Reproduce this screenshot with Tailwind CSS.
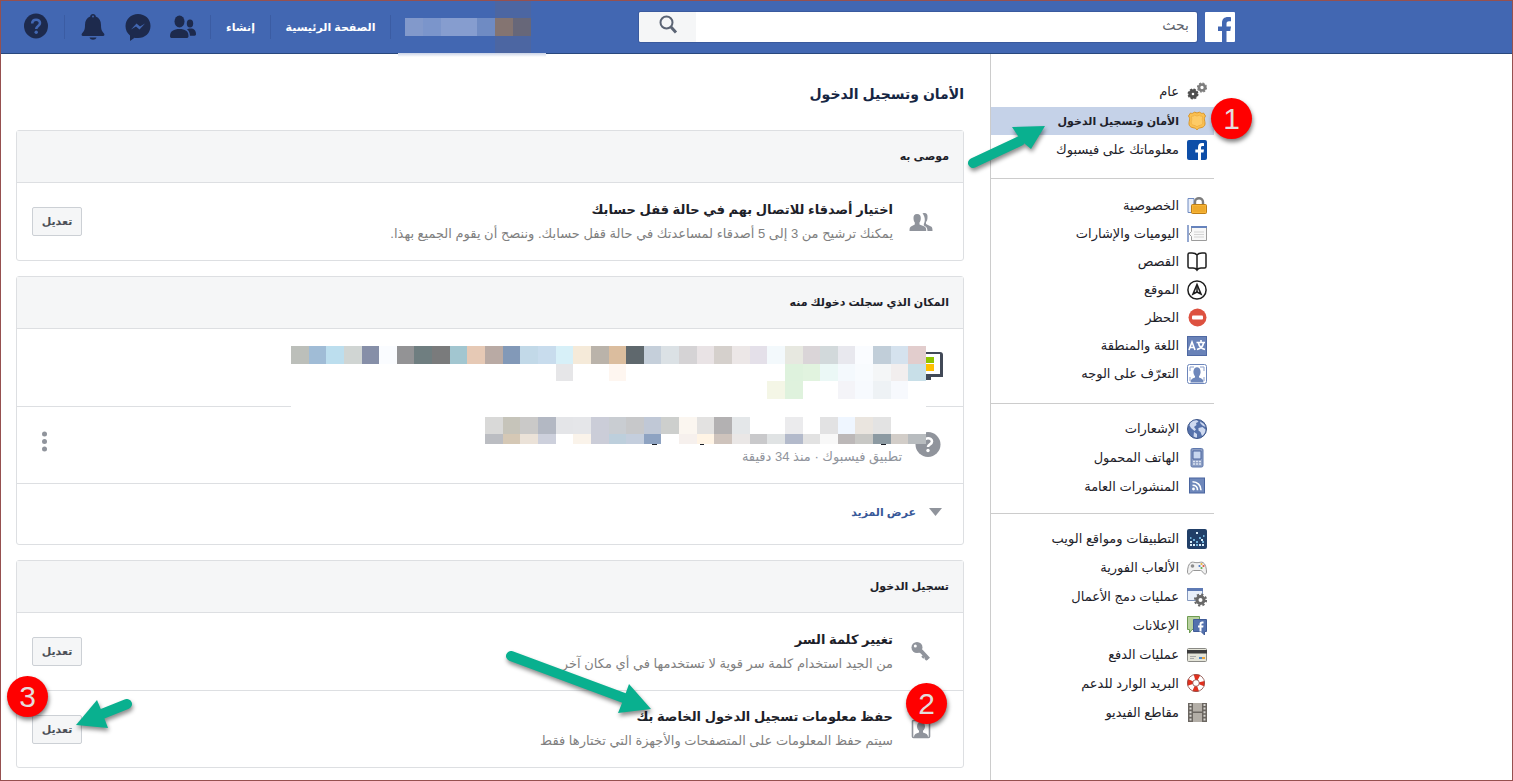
<!DOCTYPE html>
<html lang="ar" dir="rtl">
<head>
    <meta charset="UTF-8">
    <meta name="viewport" content="width=device-width, initial-scale=1.0">
    <title>الأمان وتسجيل الدخول</title>
    <script src="https://cdn.jsdelivr.net/npm/@tailwindcss/browser@4"></script>
</head>
<body class="min-h-screen flex flex-col bg-white border border-[#96504f] font-['Liberation_Sans','DejaVu_Sans',sans-serif] text-[#1d2129] overflow-x-hidden">
    <!-- Top bar -->
    <header class="relative h-[53px] shrink-0 bg-[#4267b2] border-b border-[#29487d] flex items-center pr-[277px] pl-[22px]">
        <a href="#" aria-label="فيسبوك" class="shrink-0 ml-2">
            <svg class="block" width="30" height="30" viewBox="0 0 30 30"><rect width="30" height="30" rx="1" fill="#fff"/><path d="M17 30V19h-4v-4.500h4v-3.500c0-4 2.200-6 6-6 1.300 0 2 .1 3 .3v4h-2c-2 0-2.500 1-2.500 2.500v2.700h4.500l-.7 4.500h-3.800v11z" fill="#4267b2"/></svg>
        </a>
        <form class="flex-1 h-[30px] flex bg-white rounded-xs overflow-hidden shadow-[0_0_0_1px_#3a5a9e]">
            <input type="text" aria-label="بحث" placeholder="بحث" class="flex-1 min-w-0 px-2 pb-1 text-[14px] outline-none placeholder:text-[#5f646d]">
            <button type="button" aria-label="ابحث" class="w-[57px] bg-[#f5f6f7] flex items-center justify-center pb-1">
                <svg width="20" height="22" viewBox="0 0 20 22" fill="none" stroke="#5b6474"><circle cx="8.500" cy="8.500" r="6" stroke-width="2"/><path d="M13 13l5 5.500" stroke-width="3"/></svg>
            </button>
        </form>
        <nav class="flex items-center shrink-0 text-white text-[11px] font-bold pr-[108px]">
            <svg class="block" width="126" height="18" viewBox="0 0 126 18" shape-rendering="crispEdges"><path fill="#8299cb" d="M0 0h18v18H0z"/><path fill="#7b95cb" d="M18 0h18v18H18z"/><path fill="#869dcf" d="M36 0h36v18H36z"/><path fill="#6f8bc3" d="M72 0h18v18H72z"/><path fill="#8c7a70" d="M90 0h18v18H90z"/><path fill="#66687b" d="M108 0h18v18h-18z"/></svg>
            <span class="w-px h-6 bg-[#3b5ca3] mx-[14px]"></span>
            <a href="#" class="w-[91px] text-center whitespace-nowrap">الصفحة الرئيسية</a>
            <span class="w-px h-6 bg-[#3b5ca3] mx-[14px]"></span>
            <a href="#" class="w-[31px] text-center whitespace-nowrap">إنشاء</a>
            <span class="w-px h-6 bg-[#3b5ca3] mx-[14px]"></span>
            <div class="flex gap-[19px]">
                <button type="button" aria-label="طلبات الصداقة">
                    <svg class="block" width="26" height="26" viewBox="0 0 26 26" fill="#1d2a4d"><ellipse cx="9.500" cy="7.500" rx="5" ry="6"/><path d="M0 22c0-5 4-7 9.500-7s9 2 9 7c0 1.500-.8 2-2 2H2c-1.300 0-2-.5-2-2z"/><ellipse cx="20" cy="9.500" rx="3.200" ry="4"/><path d="M17 15.500c1-.8 2-1 3.500-1 3.500 0 5.500 2 5.500 5.500 0 1.300-.5 1.700-1.500 1.700h-4.600c0-2.800-1-4.900-2.900-6.200z"/></svg>
                </button>
                <button type="button" aria-label="الرسائل">
                    <svg class="block" width="26" height="28" viewBox="0 0 26 28"><path fill="#1d2a4d" d="M13 1C6 1 .5 6 .5 13c0 4 1.700 7.200 4.500 9.500V28l4.600-3.200c1 .2 1.900.3 3.400.3 7 0 12.500-5.100 12.500-12.100S20 1 13 1z"/><path fill="#4267b2" d="M6 16.500l5.500-6 3.500 3 5-3-5.500 6-3.500-3z"/></svg>
                </button>
                <button type="button" aria-label="الإشعارات">
                    <svg class="block" width="26" height="28" viewBox="0 0 26 28" fill="#1d2a4d"><path d="M13 1c1.600 0 2.800 1.100 2.800 2.600C19.300 5 21 8 21 12c0 5 1.300 6.700 3 8.500.8 1 .4 2.500-1 2.500H3c-1.400 0-1.800-1.500-1-2.500 1.700-1.800 3-3.500 3-8.500 0-4 1.700-7 5.200-8.400C10.200 2.100 11.400 1 13 1z"/><path d="M9.500 24.500h7c-.6 1.500-1.800 2.200-3.500 2.200s-2.900-.7-3.500-2.200z"/><circle cx="13" cy="3.500" r=".9" fill="#4267b2"/></svg>
                </button>
            </div>
            <span class="w-px h-6 bg-[#3b5ca3] mx-[15px]"></span>
            <button type="button" aria-label="مساعدة">
                <svg class="block" width="26" height="28" viewBox="0 0 26 28"><ellipse cx="13" cy="13" rx="12" ry="12.500" fill="#1d2a4d"/><path d="M9.200 10.500c0-5 7.800-5 7.800-.4 0 3-3.800 2.800-3.800 6" fill="none" stroke="#4267b2" stroke-width="2.600"/><circle cx="13.200" cy="19.300" r="1.700" fill="#4267b2"/></svg>
            </button>
        </nav>
        <!-- hidden name column and the smear under it -->
        <div class="absolute -top-px left-[494px] w-9 h-[54px] bg-[#6a6472]/25"></div>
        <div class="absolute top-[52px] left-[397px] w-[148px] h-1 bg-linear-to-b from-[#c9d2e6] to-white"></div>
    </header>

    <div class="flex flex-1 pr-[298px]">
        <!-- Settings menu -->
        <aside class="w-[224px] shrink-0 border-l border-[#cccccc] pt-6 text-[13px] leading-5 text-[#1d2129]">
            <ul class="flex flex-col gap-px pb-[14px]">
                <li><a href="#" class="h-7 flex items-center gap-2 pr-[7px]">
                    <svg width="20" height="20" viewBox="0 0 20 20" fill="none"><circle cx="6" cy="12" r="3" stroke="#4f4f4f" stroke-width="3.400"/><circle cx="6" cy="12" r="4.800" stroke="#4f4f4f" stroke-width="1.400" stroke-dasharray="2.200 1.570"/><circle cx="15" cy="5.500" r="3" stroke="#7d7d7d" stroke-width="2.700"/><circle cx="15" cy="5.500" r="4.500" stroke="#7d7d7d" stroke-width="1.200" stroke-dasharray="2 1.530"/></svg>
                    عام</a></li>
                <li class="relative"><a href="#" aria-current="page" class="h-7 flex items-center gap-2 pr-[7px] bg-[#c5d2e8] font-bold text-[11px]">
                    <svg width="20" height="20" viewBox="0 0 20 20"><path d="M3.500 2c1.500.8 3 .3 3.800-1L10 2l2.700-1c.8 1.300 2.300 1.800 3.800 1L18.500 5c-1.300 1.600-1.300 3.200-.7 5.500.8 3.700-.6 5.600-3.800 6.200-2.100.4-3.200.8-4 2.300-.8-1.500-1.900-1.900-4-2.300-3.200-.6-4.600-2.500-3.800-6.200.6-2.300.6-3.900-.7-5.500z" fill="#fbc04f" stroke="#d9962c"/><path d="M5 5c1 .3 1.800 0 2.500-.8l2.500.8 2.500-.8c.7.8 1.500 1.100 2.500.8l.8 1c-.8 1.500-.5 3 0 4.800.3 2.200-.8 3.200-2.800 3.600-1.400.3-2.300.7-3 1.400-.7-.7-1.600-1.100-3-1.400-2-.4-3.100-1.400-2.800-3.600.5-1.800.8-3.300 0-4.800z" fill="#fdcb66" stroke="#f0b348"/></svg>
                    الأمان وتسجيل الدخول</a>
                    <span class="absolute z-10 -right-[38px] -top-[9px] w-[41px] h-[41px] rounded-full bg-[#ff0000] text-[#e4dcdc] text-[30px] leading-[41px] text-center shadow-[1px_3px_4px_rgba(0,0,0,0.5)]">1</span>
                    <svg class="absolute z-10 right-[164px] top-[12px] drop-shadow-[1px_3px_2px_rgba(0,0,0,0.45)]" width="90" height="54" viewBox="0 0 90 54"><path d="M13 44L60 22" stroke="#09b08f" stroke-width="10" stroke-linecap="round"/><path d="M85 7L52 8l8 12 5 5 6 5z" fill="#09b08f"/></svg></li>
                <li><a href="#" class="h-7 flex items-center gap-2 pr-[7px]">
                    <svg width="20" height="20" viewBox="0 0 20 20"><rect width="20" height="20" rx="2" fill="#0d4ea8"/><path d="M11 20v-7.500H8.300v-3H11V7.300C11 4.500 12.500 3 15 3c.8 0 1.500.1 2 .2V6h-1.400c-1.200 0-1.600.6-1.600 1.600v1.900h3l-.5 3H14V20z" fill="#fff"/></svg>
                    معلوماتك على فيسبوك</a></li>
            </ul>
            <ul class="flex flex-col border-t border-[#cccccc] pt-[13px] pb-[15px]">
                <li><a href="#" class="h-7 flex items-center gap-2 pr-[7px]">
                    <svg width="20" height="20" viewBox="0 0 20 20"><path d="M1 2.500h6v14H1z" fill="#e8eefa" stroke="#6f8ac0"/><path d="M8 9V6c0-5 8-5 8 0v3" fill="none" stroke="#7d7d7d" stroke-width="2.400"/><rect x="4.500" y="8.500" width="15" height="9" rx="1" fill="#f7b436" stroke="#bd7e17"/><path d="M6 11h12M6 13h12M6 15h12" stroke="#e49f25"/></svg>
                    الخصوصية</a></li>
                <li><a href="#" class="h-7 flex items-center gap-2 pr-[7px]">
                    <svg width="20" height="20" viewBox="0 0 20 20"><path d="M1 1v17" stroke="#6f8ac0" stroke-width="1.500"/><path d="M4.500 3.500h15v13h-15v-4l-2.500-2.500 2.500-2.500z" fill="#f8f8f8" stroke="#9b9b9b"/><path d="M4 3h16" stroke="#6683bd" stroke-width="2"/><path d="M7 8h10M7 10.500h10M7 13h10" stroke="#d4d4d4"/></svg>
                    اليوميات والإشارات</a></li>
                <li><a href="#" class="h-7 flex items-center gap-2 pr-[7px]">
                    <svg width="20" height="20" viewBox="0 0 20 20" fill="none" stroke="#1d1d1d" stroke-width="1.500"><path d="M10 3C9 1.600 7.500 1 5 1H2.500C1.500 1 1 1.500 1 2.500v12c0 1 .5 1.500 1.500 1.500H6c2.200 0 3.300.8 4 2 .7-1.200 1.800-2 4-2h3.500c1 0 1.500-.5 1.500-1.500v-12c0-1-.5-1.500-1.500-1.500H15c-2.500 0-4 .6-5 2zM10 3v14"/></svg>
                    القصص</a></li>
                <li><a href="#" class="h-7 flex items-center gap-2 pr-[7px]">
                    <svg width="20" height="20" viewBox="0 0 20 20" fill="none" stroke="#1d1d1d"><circle cx="10" cy="10" r="9.100" stroke-width="1.500"/><path d="M10 4.500l4 9.500-4-2-4 2z" stroke-width="1.600"/><path d="M10 5v7" stroke-width="1.500"/></svg>
                    الموقع</a></li>
                <li><a href="#" class="h-7 flex items-center gap-2 pr-[7px]">
                    <svg width="20" height="20" viewBox="0 0 20 20"><circle cx="10.500" cy="9.500" r="9" fill="#dd5140"/><rect x="5" y="7.500" width="11" height="4" rx="1" fill="#fff"/></svg>
                    الحظر</a></li>
                <li><a href="#" class="h-7 flex items-center gap-2 pr-[7px]">
                    <svg width="20" height="20" viewBox="0 0 20 20" fill="none" stroke="#fff" stroke-width="1.600"><rect x=".5" y=".5" width="19" height="19" fill="#6982b8" stroke="#4f69a3" stroke-width="1"/><path d="M2 14L5 6l3 8M3 11.500h4"/><path d="M9.500 6.500H18M14 4v2.500M11.500 7c.5 3 3 5.500 6.500 6.500M16.500 7c-.5 3-3 5.500-6.500 6.500"/></svg>
                    اللغة والمنطقة</a></li>
                <li><a href="#" class="h-7 flex items-center gap-2 pr-[7px]">
                    <svg width="20" height="20" viewBox="0 0 20 20"><rect x=".5" y=".5" width="19" height="19" rx="2" fill="#fff" stroke="#6d86bb"/><path d="M3 7V3h4M13 3h4v4M3 13v4M17 13v4" fill="none" stroke="#8b9fcb"/><ellipse cx="10" cy="8" rx="3.600" ry="4.800" fill="#6f88bb"/><path d="M8 11h4v2.500c3 .7 4.500 2 4.500 5h-13c0-3 1.500-4.300 4.500-5z" fill="#6f88bb"/></svg>
                    التعرّف على الوجه</a></li>
            </ul>
            <ul class="flex flex-col gap-px border-t border-[#cccccc] pt-[11px] pb-3">
                <li><a href="#" class="h-7 flex items-center gap-2 pr-[7px]">
                    <svg width="20" height="20" viewBox="0 0 20 20"><circle cx="10" cy="10" r="9.500" fill="#5672ab" stroke="#3d5689"/><path d="M3 4.500C5 2 7.500 1 10 1.200l1.500 1.500L9 4l.5 2L7 8l2 2.500L7.500 12 4 9 2.500 6.500zM13 2.500l4 2.500 1.500 3-3-1.500-2-2zM11.500 9l4-1 3 2.500c0 3-1.300 5-3.500 6.500l-1.500-4-2-1.500zM7 13l3 2v3.500c-1.500 0-2.500-.5-3.500-1z" fill="#cfdaf0"/></svg>
                    الإشعارات</a></li>
                <li><a href="#" class="h-7 flex items-center gap-2 pr-[7px]">
                    <svg width="20" height="20" viewBox="0 0 20 20"><rect x="4" y=".5" width="12" height="18.500" rx="1.500" fill="#8b9dc3" stroke="#5f78ad"/><path d="M6 3h8v8H6z" fill="#c7d6ef" stroke="#4b659f"/><path d="M6 13.500h2.200M9 13.500h2.200M12 13.500h2M6 16h2.200M9 16h2.200M12 16h2" stroke="#dce4f2" stroke-width="1.300"/></svg>
                    الهاتف المحمول</a></li>
                <li><a href="#" class="h-7 flex items-center gap-2 pr-[7px]">
                    <svg width="20" height="20" viewBox="0 0 20 20"><rect x="2.500" y="1" width="15" height="15" fill="#6f88bb" stroke="#4a659f"/><circle cx="6.500" cy="12" r="1.400" fill="#fff"/><path d="M5.500 8.200c3 0 5 2 5 5M5.500 4.700c5 0 8.500 3.500 8.500 8.500" fill="none" stroke="#fff" stroke-width="1.600"/></svg>
                    المنشورات العامة</a></li>
            </ul>
            <ul class="flex flex-col gap-px border-t border-[#cccccc] pt-[11px]">
                <li><a href="#" class="h-7 flex items-center gap-2 pr-[7px]">
                    <svg width="20" height="20" viewBox="0 0 20 20"><rect width="20" height="20" rx="2" fill="#213f68"/><path fill="#d9eefa" d="M9 3h2v2H9zM3 12h2v2H3zM14 10h2v2h-2zM6 15h2v2H6zM12 15h2v2h-2zM15 15h2v2h-2zM3 15h2v2H3z"/><path fill="#6fb0d8" d="M6 10h2v2H6zM12 8h2v2h-2zM9 15h2v2H9zM15 12h2v2h-2zM9 12h2v2H9zM3 8h1.500v2H3zM16 6h1.500v2H16z"/></svg>
                    التطبيقات ومواقع الويب</a></li>
                <li><a href="#" class="h-7 flex items-center gap-2 pr-[7px]">
                    <svg width="20" height="20" viewBox="0 0 20 20"><path d="M4 4.500c2-1 3 .2 6 .2s4-1.200 6-.2c2.500 1.200 3.500 6 3.500 9.500 0 2.700-2.200 2.500-3.500.5-1-1.500-1.500-2-2.500-2h-7c-1 0-1.500.5-2.500 2-1.300 2-3.500 2.200-3.500-.5 0-3.500 1-8.300 3.500-9.500z" fill="#f1f1f1" stroke="#969696"/><circle cx="5.500" cy="8" r="1.800" fill="#8d8d8d"/><circle cx="14.500" cy="6" r="1.100" fill="#e9b53c"/><circle cx="14.500" cy="10" r="1.100" fill="#65ad4c"/><circle cx="12.500" cy="8" r="1.100" fill="#4877c9"/><circle cx="16.500" cy="8" r="1.100" fill="#e2543b"/></svg>
                    الألعاب الفورية</a></li>
                <li><a href="#" class="h-7 flex items-center gap-2 pr-[7px]">
                    <svg width="20" height="20" viewBox="0 0 20 20"><path d="M.5 1.500h15v12H.5z" fill="#e9f0fa" stroke="#8397bd"/><path d="M0 1h16v3H0z" fill="#5e7ab4"/><circle cx="13.500" cy="13" r="3.500" fill="#fff" stroke="#686868" stroke-width="3"/><circle cx="13.500" cy="13" r="5.600" fill="none" stroke="#686868" stroke-width="2" stroke-dasharray="2.200 2.200"/></svg>
                    عمليات دمج الأعمال</a></li>
                <li><a href="#" class="h-7 flex items-center gap-2 pr-[7px]">
                    <svg width="20" height="20" viewBox="0 0 20 20"><path d="M.5.500h12v13H5L2.500 17v-3.500h-2z" fill="#b8d19f" stroke="#6f9c52"/><path d="M6.500 3.500h13v12h-2V19L14 15.500H6.500z" fill="#5370ad" stroke="#3f5b97"/><path d="M12.500 15.500v-4H11V9.500h1.500V8.200c0-1.800 1-2.700 2.600-2.700h1.400v2h-1c-.8 0-1 .3-1 1v1h2l-.3 2h-1.700v4z" fill="#fff"/></svg>
                    الإعلانات</a></li>
                <li><a href="#" class="h-7 flex items-center gap-2 pr-[7px]">
                    <svg width="20" height="20" viewBox="0 0 20 20"><rect x=".5" y="3.500" width="19" height="13" rx="1" fill="#e4e4d8" stroke="#8a8a85"/><path d="M0 5h20v3.500H0z" fill="#3b3b3b"/><path d="M3 11.500h6M3 13.500h4" stroke="#aaa"/><path d="M12 13h3" stroke="#4b87cc" stroke-width="2"/><path d="M15 13h3" stroke="#e9a33a" stroke-width="2"/></svg>
                    عمليات الدفع</a></li>
                <li><a href="#" class="h-7 flex items-center gap-2 pr-[7px]">
                    <svg width="20" height="20" viewBox="0 0 20 20" fill="none"><circle cx="9" cy="9" r="6" stroke="#fff" stroke-width="5.500"/><circle cx="9" cy="9" r="6" stroke="#e0301e" stroke-width="5.500" stroke-dasharray="4.700 4.720" stroke-dashoffset="2.350"/><circle cx="9" cy="9" r="8.600" stroke="#8c4a44" stroke-width=".8"/><circle cx="9" cy="9" r="3.300" stroke="#8c4a44" stroke-width=".8"/></svg>
                    البريد الوارد للدعم</a></li>
                <li><a href="#" class="h-7 flex items-center gap-2 pr-[7px]">
                    <svg width="20" height="20" viewBox="0 0 20 20"><path d="M1 0h19v19H1z" fill="#6b6661"/><path d="M6 0h9v8.500H6zM6 10h9v9H6z" fill="#b3aea7"/><path d="M3.500 1v18M17.500 1v18" stroke="#d8d5d1" stroke-width="2" stroke-dasharray="2 1.600"/></svg>
                    مقاطع الفيديو</a></li>
            </ul>
        </aside>

        <!-- Content -->
        <main class="flex-1 min-w-0 pr-[26px] pl-[15px] pb-3">
            <h1 class="h-[76px] pt-6 text-[14px] leading-8 font-bold text-[#162643]">الأمان وتسجيل الدخول</h1>
            <div class="flex flex-col gap-[15px]">
                <section class="border border-[#dddfe2] rounded-[3px]">
                    <h2 class="h-[52px] px-[14px] bg-[#f5f6f7] border-b border-[#dddfe2] text-[11px] leading-[50px] font-bold">موصى به</h2>
                    <div class="h-[77px] flex items-center pr-[30px] pl-[15px] gap-4">
                        <svg class="shrink-0" width="24" height="24" viewBox="0 0 24 24" fill="#90949c"><path d="M13.500 3.500c3.500-1.300 5.500.5 5 4.500-.2 2-.6 3-1.500 4v2l5 2.500c1.200.6 1.500 1.700 1.500 4.500H18.500c-.2-3-1-4.200-3.700-5.400v-1.700c1.400-2.400 1.700-7-1.300-10.400z"/><path d="M8 4c2.900 0 4 2 3.800 4.500-.1 2-.6 3-1.300 4v2l5 2c1.300.7 1.700 2 1.700 4.500H.5c0-2.500.3-3.800 1.500-4.500l3.800-2v-2c-.7-1-1.200-2-1.300-4C4.300 6 5.400 4 8 4z"/></svg>
                        <div class="flex-1">
                            <h3 class="text-[13px] leading-6 font-bold">اختيار أصدقاء للاتصال بهم في حالة قفل حسابك</h3>
                            <p class="text-[13px] leading-6 text-[#7f7f7f]">يمكنك ترشيح من 3 إلى 5 أصدقاء لمساعدتك في حالة قفل حسابك. وننصح أن يقوم الجميع بهذا.</p>
                        </div>
                        <button type="button" class="w-[50px] h-[29px] bg-[#f5f6f7] border border-[#ccd0d5] rounded-xs text-[11px] font-bold text-[#4b4f56]">تعديل</button>
                    </div>
                </section>

                <section class="relative border border-[#dddfe2] rounded-[3px]">
                    <h2 class="h-[52px] px-[14px] bg-[#f5f6f7] border-b border-[#dddfe2] text-[11px] leading-[50px] font-bold">المكان الذي سجلت دخولك منه</h2>
                    <div class="h-[78px] border-b border-[#dddfe2] flex items-center pr-5 pb-1">
                        <svg width="32" height="30" viewBox="0 0 32 30"><path d="M3 1h26q3 0 3 3v22H1V3q0-2 2-2z" fill="#414957"/><path d="M3 3h26v20H3z" fill="#fff"/><path d="M10 26h10v3H10z" fill="#414957"/><path d="M15 6h8v6h-8z" fill="#8fc400"/><path d="M15 13h8v7h-8z" fill="#ffc000"/></svg>
                    </div>
                    <div class="h-[77px] border-b border-[#dddfe2] flex items-center pr-[22px] pl-[25px] gap-[13px]">
                        <svg class="shrink-0" width="26" height="26" viewBox="0 0 26 26"><circle cx="13" cy="12.500" r="12.500" fill="#90949c"/><path d="M9 10c0-5 8-5 8-.5 0 3-4 2.700-4 5.500" fill="none" stroke="#fff" stroke-width="2.600"/><circle cx="13" cy="18.500" r="1.700" fill="#fff"/></svg>
                        <p class="flex-1 pt-6 text-[13px] leading-6 text-[#90949c]">تطبيق فيسبوك · منذ 34 دقيقة</p>
                        <button type="button" aria-label="خيارات" class="pb-2"><svg class="block" width="5" height="21" viewBox="0 0 5 21" fill="#90949c"><circle cx="2.500" cy="3" r="2.500"/><circle cx="2.500" cy="10.500" r="2.500"/><circle cx="2.500" cy="18" r="2.500"/></svg></button>
                    </div>
                    <a href="#" class="h-[60px] flex items-center pr-[21px] pb-1 gap-[13px] text-[11px] font-bold text-[#385898]">
                        <svg width="13" height="8" viewBox="0 0 13 8"><path d="M0 0h13L6.500 8z" fill="#90949c"/></svg>عرض المزيد</a>
                    <!-- pixelated device names, with the feet of a few letters below -->
                    <svg id="mosaic" class="absolute right-[37px] top-[69px] overflow-visible" width="635" height="98" viewBox="0 0 635 98" shape-rendering="crispEdges"><path d="M0 0h635v98H0z" fill="#fff"/><path d="M361 98h5v1h-5zM409 98h4v1h-4zM590 98h5v1h-5z" fill="#1d2129"/></svg>
                </section>

                <section class="border border-[#dddfe2] rounded-[3px]">
                    <h2 class="h-[52px] px-[14px] bg-[#f5f6f7] border-b border-[#dddfe2] text-[11px] leading-[50px] font-bold">تسجيل الدخول</h2>
                    <div class="h-[78px] border-b border-[#dddfe2] flex items-center pr-[30px] pl-[15px] gap-4">
                        <svg class="shrink-0" width="24" height="24" viewBox="0 0 24 24"><path d="M9 9l3.500 2.500 7 7.500" stroke="#90949c" stroke-width="4"/><path d="M13 16l2 2M16 18l2 2" stroke="#90949c" stroke-width="2"/><circle cx="8" cy="7.500" r="5.500" fill="#90949c"/><circle cx="6.300" cy="6" r="1.500" fill="#fff"/></svg>
                        <div class="flex-1">
                            <h3 class="text-[13px] leading-6 font-bold">تغيير كلمة السر</h3>
                            <p class="text-[13px] leading-6 text-[#7f7f7f]">من الجيد استخدام كلمة سر قوية لا تستخدمها في أي مكان آخر</p>
                        </div>
                        <button type="button" class="w-[50px] h-[29px] bg-[#f5f6f7] border border-[#ccd0d5] rounded-xs text-[11px] font-bold text-[#4b4f56]">تعديل</button>
                    </div>
                    <div class="relative h-[76px] flex items-center pr-[30px] pl-[15px] gap-4">
                        <svg class="shrink-0" width="24" height="24" viewBox="0 0 24 24"><rect x="3.500" y="3.500" width="17" height="17" rx="1" fill="#fff" stroke="#90949c" stroke-width="1.600"/><ellipse cx="12" cy="9.500" rx="4" ry="4.800" fill="#90949c"/><path d="M10 13h4v2.500c3 .8 5 1.700 5 4.500H5c0-2.800 2-3.700 5-4.500z" fill="#90949c"/></svg>
                        <div class="flex-1">
                            <h3 class="text-[13px] leading-6 font-bold">حفظ معلومات تسجيل الدخول الخاصة بك</h3>
                            <p class="text-[13px] leading-6 text-[#7f7f7f]">سيتم حفظ المعلومات على المتصفحات والأجهزة التي تختارها فقط</p>
                        </div>
                        <button type="button" class="w-[50px] h-[29px] bg-[#f5f6f7] border border-[#ccd0d5] rounded-xs text-[11px] font-bold text-[#4b4f56]">تعديل</button>

                        <span class="absolute right-[16px] -top-[8px] w-[41px] h-[41px] rounded-full bg-[#ff0000] text-[#e4dcdc] text-[30px] leading-[41px] text-center shadow-[1px_3px_4px_rgba(0,0,0,0.5)]">2</span>
                        <svg class="absolute right-[303px] -top-[51px] drop-shadow-[1px_3px_2px_rgba(0,0,0,0.45)]" width="160" height="80" viewBox="0 0 160 80"><path d="M11 16L124 58" stroke="#09b08f" stroke-width="10" stroke-linecap="round"/><path d="M151 69l-22-25-5 14-6 15z" fill="#09b08f"/></svg>
                        <span class="absolute -left-[10px] -top-[15px] w-[41px] h-[41px] rounded-full bg-[#ff0000] text-[#e4dcdc] text-[30px] leading-[41px] text-center shadow-[1px_3px_4px_rgba(0,0,0,0.5)]">3</span>
                        <svg class="absolute left-[53px] -top-[1px] drop-shadow-[1px_3px_2px_rgba(0,0,0,0.45)]" width="70" height="46" viewBox="0 0 70 46"><path d="M57 14L32 24" stroke="#09b08f" stroke-width="10" stroke-linecap="round"/><path d="M6 35l21-25 5 12 6 16z" fill="#09b08f"/></svg>
                    </div>
                </section>
            </div>
        </main>
    </div>

    <script>
        // Each row: top, height, first column, then one colour per column ('' leaves it white)
        const rows = [
            [0, 18, 0, '#bcbfba,#a0bcd6,#bcdeee,#d0d5d3,#868fa8,#fafcff,#939395,#6f7e80,#7a7b7c,#a2c6d0,#e6c9b5,#b9aaa4,#8299b8,#c2d9e8,#c8dced,#d7f0f8,#f5ead9,#bab3aa,#dbbd9e,#5f686d,#c5cfda,#dbe1e5,#d5d3d5,#e9e3e5,#d5d0cc,#ece7e7,#e4e0e9,#f3f9fc,#e7e8e0,#dad5d8,#d2d9db,#e8e8ee,#fafcff,#c1ced9,#d5e2ee,#e2cdcd'],
            [18, 17, 15, '#e6e6e8,,,#fef6f0,,,,,,,,,,#def2dd,#e1f3df,#ebf8f6,#f4f9fd,#f8fbfe,#f4f6f7,#f2eeee,#c8dfe8'],
            [35, 18, 27, '#f4f6e6,#dff2dd,,,#f4f4f8,#f7fafe,#eef2f5,#f7f9fd'],
            [71, 17, 11, '#d9d9d8,#c6c4ba,#cac9c8,#b3b8c3,#e4e5e8,#e5e6e9,#cbcdd8,#c9cdd2,#c7c8ca,#c0c8d6,#cdcfcd,#fbf6f0,#e3e2e1,#b3b1b2,#e4e7e9,,,#ebebed,,#e2e2e3,#eff6ff,#eae5df,#e3e3e3'],
            [88, 10, 11, '#bbbdc2,#d5c8b5,#ebe2d8,#cdd0dc,,#faf3ea,#cbcdd8,#bdcfdc,#c4cedd,#8ea3c2,,#f6f0ed,#fff4e5,#cec3bc,#eae7e6,#c9c9cb,#e0e3e4,#b3bacb,#e2e2e2,#f8f8f8,#bcb8b8,#c8c8c5,#8c9aa2,#d2cdc8,#b8bcbf']
        ];
        const mosaic = document.getElementById('mosaic');
        const cell = 635 / 36;
        rows.forEach(([top, height, start, colors]) => {
            colors.split(',').forEach((color, i) => {
                if (!color) return;
                const x = Math.round((start + i) * cell);
                const rect = document.createElementNS('http://www.w3.org/2000/svg', 'rect');
                rect.setAttribute('x', x);
                rect.setAttribute('y', top);
                rect.setAttribute('width', Math.round((start + i + 1) * cell) - x);
                rect.setAttribute('height', height);
                rect.setAttribute('fill', color);
                mosaic.appendChild(rect);
            });
        });
    </script>
</body>
</html>
